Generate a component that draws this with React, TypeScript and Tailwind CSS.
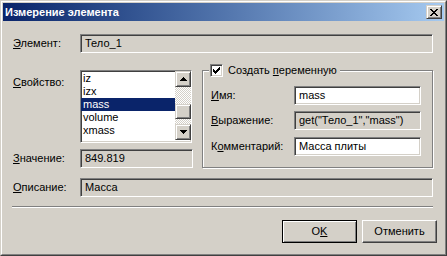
import type { ReactNode } from "react"

const face = "bg-[#d4d0c8]"
const sunken =
  "border border-t-[#808080] border-l-[#808080] border-r-white border-b-white shadow-[inset_1px_1px_0_#404040,inset_-1px_-1px_0_#d4d0c8]"
const raised =
  "border border-t-[#d4d0c8] border-l-[#d4d0c8] border-r-[#404040] border-b-[#404040] shadow-[inset_1px_1px_0_#fff,inset_-1px_-1px_0_#808080]"

function Field({ value, white, className }: { value: string; white?: boolean; className: string }) {
  return (
    <div className={`${sunken} ${white ? "bg-white" : face} h-[19px] pl-[4px] flex items-center whitespace-nowrap ${className}`}>
      {value}
    </div>
  )
}

function Label({ children, className = "" }: { children: ReactNode; className?: string }) {
  return <div className={`shrink-0 whitespace-nowrap ${className}`}>{children}</div>
}

function Arrow({ up }: { up?: boolean }) {
  return (
    <svg width="7" height="4" viewBox="0 0 7 4" shapeRendering="crispEdges">
      {up ? <path d="M3 0h1v1h1v1h1v1h1v1H0V3h1V2h1V1h1z" fill="#000" /> : <path d="M0 0h7v1H6v1H5v1H4v1H3V3H2V2H1V1H0z" fill="#000" />}
    </svg>
  )
}

function ListBox() {
  const items = ["iz", "izx", "mass", "volume", "xmass"]
  return (
    <div className={`${sunken} bg-white w-[112px] h-[73px] flex`}>
      <div className="flex-1 flex flex-col pt-[1px] overflow-hidden">
        {items.map((it) => (
          <div
            key={it}
            className={`h-[13px] leading-[13px] pl-[2px] shrink-0 ${it === "mass" ? "bg-[#0a246a] text-white" : ""}`}
          >
            {it}
          </div>
        ))}
      </div>
      {/* scrollbar */}
      <div className="w-[16px] flex flex-col">
        <div className={`${raised} ${face} h-[16px] flex items-center justify-center`}>
          <Arrow up />
        </div>
        <div className="h-[17px] bg-[conic-gradient(#fff_25%,#d4d0c8_0_50%,#fff_0_75%,#d4d0c8_0)] bg-[length:2px_2px]" />
        <div className={`${raised} ${face} h-[15px]`} />
        <div className="h-[5px] bg-[conic-gradient(#fff_25%,#d4d0c8_0_50%,#fff_0_75%,#d4d0c8_0)] bg-[length:2px_2px]" />
        <div className={`${raised} ${face} h-[16px] flex items-center justify-center`}>
          <Arrow />
        </div>
      </div>
    </div>
  )
}

export default function App() {
  return (
    <div className="w-[447px] h-[256px] font-['Liberation_Sans',Arial,sans-serif] text-[11px] text-black">
      {/* window frame */}
      <div className={`h-full ${face} border border-t-[#d4d0c8] border-l-[#d4d0c8] border-r-[#404040] border-b-[#404040]`}>
        <div className="h-full border border-t-white border-l-white border-r-[#808080] border-b-[#808080] p-[1px] flex flex-col">
          {/* title bar */}
          <div className="h-[18px] shrink-0 flex items-center bg-linear-to-r from-[#0a246a] to-[#a6caf0] pl-[2px] pr-[2px]">
            <div className="flex-1 text-white font-bold text-[11px]">Измерение элемента</div>
            <div className={`${raised} ${face} w-[16px] h-[14px] flex items-center justify-center`}>
              <svg width="8" height="7" viewBox="0 0 8 7" shapeRendering="crispEdges">
                <path d="M0 0h2v1h1v1h2V1h1V0h2v1H7v1H6v1H5v1h1v1h1v1h1v1H6V6H5V5H3v1H2v1H0V6h1V5h1V4h1V3H2V2H1V1H0z" fill="#000" />
              </svg>
            </div>
          </div>

          {/* body */}
          <div className="flex flex-col pl-[10px]">
            <div className="mt-[13px] flex items-center">
              <Label className="w-[67px]"><u>Э</u>лемент:</Label>
              <Field value="Тело_1" className="w-[353px]" />
            </div>

            <div className="mt-[17px] flex">
              <div className="flex flex-col w-[180px]">
                <div className="flex">
                  <Label className="w-[67px] pt-[4px]"><u>С</u>войство:</Label>
                  <ListBox />
                </div>
                <div className="mt-[6px] flex items-center">
                  <Label className="w-[67px]"><u>З</u>начение:</Label>
                  <Field value="849.819" className="w-[113px]" />
                </div>
              </div>

              {/* group box */}
              <div className="relative ml-[9px] w-[231px] h-[98px] border border-[#808080] shadow-[inset_1px_1px_0_#fff,1px_1px_0_#fff] pl-[8px] pt-[15px] flex flex-col">
                <div className={`absolute left-[6px] top-[-7px] h-[13px] ${face} pl-[1px] pr-[3px] flex items-center gap-[5px]`}>
                  <div className={`${sunken} bg-white w-[13px] h-[13px] flex items-center justify-center`}>
                    <svg width="7" height="7" viewBox="0 0 7 7" shapeRendering="crispEdges">
                      <path d="M6 0h1v3H6v1H5v1H4v1H3v1H2V6H1V5H0V2h1v1h1v1h1V3h1V2h1V1h1z" fill="#000" />
                    </svg>
                  </div>
                  <span className="whitespace-nowrap">Создать <u>п</u>еременную</span>
                </div>
                <div className="flex items-center">
                  <Label className="w-[83px]"><u>И</u>мя:</Label>
                  <Field value="mass" white className="w-[127px]" />
                </div>
                <div className="mt-[6px] flex items-center">
                  <Label className="w-[83px]"><u>В</u>ыражение:</Label>
                  <Field value={'get("Тело_1","mass")'} className="w-[127px]" />
                </div>
                <div className="mt-[7px] flex items-center">
                  <Label className="w-[83px]">К<u>о</u>мментарий:</Label>
                  <Field value="Масса плиты" white className="w-[127px]" />
                </div>
              </div>
            </div>

            <div className="mt-[10px] flex items-center">
              <Label className="w-[67px]"><u>О</u>писание:</Label>
              <Field value="Масса" className="w-[353px]" />
            </div>

            {/* separator */}
            <div className="mt-[9px] ml-[-1px] w-[421px] h-[2px] border-t border-t-[#808080] border-b border-b-white" />

            {/* buttons */}
            <div className="mt-[12px] flex justify-end gap-[5px] pr-[7px]">
              <button className="w-[75px] h-[23px] bg-[#d4d0c8] border border-black shadow-[inset_1px_1px_0_#fff,inset_-1px_-1px_0_#808080] flex items-center justify-center">
                O<u>K</u>
              </button>
              <button className={`w-[75px] h-[23px] ${face} border border-t-white border-l-white border-r-[#404040] border-b-[#404040] shadow-[inset_-1px_-1px_0_#808080] flex items-center justify-center`}>
                Отменить
              </button>
            </div>
          </div>
        </div>
      </div>
    </div>
  )
}
